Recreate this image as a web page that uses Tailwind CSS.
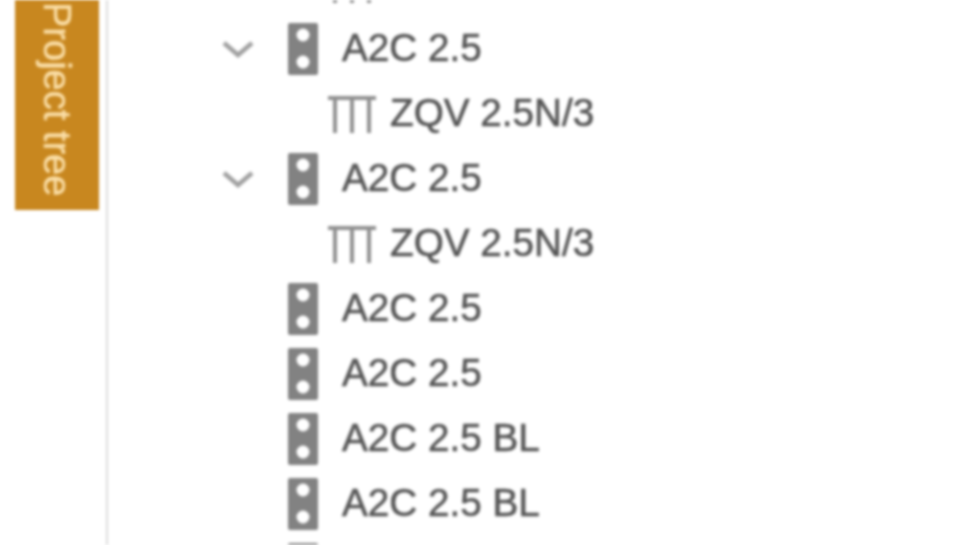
<!DOCTYPE html>
<html lang="en">
<head>
    <meta charset="UTF-8">
    <title>Project tree</title>
    <script src="https://cdn.jsdelivr.net/npm/@tailwindcss/browser@4"></script>
</head>
<body class="bg-white font-['Liberation_Sans',Arial,sans-serif]">
<div class="flex h-[545px] w-[970px] overflow-hidden bg-white blur-[1.4px]">
    <!-- side rail -->
    <div class="w-[108px] h-full shrink-0 border-r-2 border-[#dcdcdc] pl-[15px]">
        <div class="flex h-[210px] w-[84px] items-end justify-center overflow-hidden bg-[#c8871f] pb-[14px]">
            <span class="[writing-mode:vertical-rl] [-webkit-text-stroke:0.5px_#fbdfa8] whitespace-nowrap text-[38px] leading-none text-[#fbdfa8]">Project tree</span>
        </div>
    </div>

    <!-- tree -->
    <div class="-mt-[49px] flex-1 text-[38.7px] leading-none text-[#555] [-webkit-text-stroke:0.6px_#555]">
        <div class="flex h-[65px] items-center pl-[220px]">
            <svg class="w-[48px] h-[38px]" viewBox="0 0 48 38" fill="none" stroke="#8f8f8f" stroke-width="4"><path d="M0 3H48M7 3V38M24 3V38M41 3V38"/></svg>
        </div>

        <div class="flex h-[65px] items-center pl-[114px]">
            <svg class="w-[32px] h-[18px]" viewBox="0 0 32 18" fill="none" stroke="#a0a0a0" stroke-width="4.5"><path d="M2 3L16 15L30 3"/></svg>
            <svg class="ml-[34px] mr-[24px] w-[30px] h-[52px]" viewBox="0 0 30 52"><path fill="#828282" fill-rule="evenodd" d="M2 0H28A2 2 0 0 1 30 2V50A2 2 0 0 1 28 52H2A2 2 0 0 1 0 50V2A2 2 0 0 1 2 0ZM15 5.5A6.5 6.5 0 1 0 15 18.5A6.5 6.5 0 1 0 15 5.5ZM15 32.5A6.5 6.5 0 1 0 15 45.5A6.5 6.5 0 1 0 15 32.5Z"/></svg>
            <span>A2C 2.5</span>
        </div>
        <div class="flex h-[65px] items-center pl-[220px]">
            <svg class="mr-[14px] w-[48px] h-[38px]" viewBox="0 0 48 38" fill="none" stroke="#8f8f8f" stroke-width="4"><path d="M0 3H48M7 3V38M24 3V38M41 3V38"/></svg>
            <span>ZQV 2.5N/3</span>
        </div>

        <div class="flex h-[65px] items-center pl-[114px]">
            <svg class="w-[32px] h-[18px]" viewBox="0 0 32 18" fill="none" stroke="#a0a0a0" stroke-width="4.5"><path d="M2 3L16 15L30 3"/></svg>
            <svg class="ml-[34px] mr-[24px] w-[30px] h-[52px]" viewBox="0 0 30 52"><path fill="#828282" fill-rule="evenodd" d="M2 0H28A2 2 0 0 1 30 2V50A2 2 0 0 1 28 52H2A2 2 0 0 1 0 50V2A2 2 0 0 1 2 0ZM15 5.5A6.5 6.5 0 1 0 15 18.5A6.5 6.5 0 1 0 15 5.5ZM15 32.5A6.5 6.5 0 1 0 15 45.5A6.5 6.5 0 1 0 15 32.5Z"/></svg>
            <span>A2C 2.5</span>
        </div>
        <div class="flex h-[65px] items-center pl-[220px]">
            <svg class="mr-[14px] w-[48px] h-[38px]" viewBox="0 0 48 38" fill="none" stroke="#8f8f8f" stroke-width="4"><path d="M0 3H48M7 3V38M24 3V38M41 3V38"/></svg>
            <span>ZQV 2.5N/3</span>
        </div>

        <div class="flex h-[65px] items-center pl-[180px]">
            <svg class="mr-[24px] w-[30px] h-[52px]" viewBox="0 0 30 52"><path fill="#828282" fill-rule="evenodd" d="M2 0H28A2 2 0 0 1 30 2V50A2 2 0 0 1 28 52H2A2 2 0 0 1 0 50V2A2 2 0 0 1 2 0ZM15 5.5A6.5 6.5 0 1 0 15 18.5A6.5 6.5 0 1 0 15 5.5ZM15 32.5A6.5 6.5 0 1 0 15 45.5A6.5 6.5 0 1 0 15 32.5Z"/></svg>
            <span>A2C 2.5</span>
        </div>
        <div class="flex h-[65px] items-center pl-[180px]">
            <svg class="mr-[24px] w-[30px] h-[52px]" viewBox="0 0 30 52"><path fill="#828282" fill-rule="evenodd" d="M2 0H28A2 2 0 0 1 30 2V50A2 2 0 0 1 28 52H2A2 2 0 0 1 0 50V2A2 2 0 0 1 2 0ZM15 5.5A6.5 6.5 0 1 0 15 18.5A6.5 6.5 0 1 0 15 5.5ZM15 32.5A6.5 6.5 0 1 0 15 45.5A6.5 6.5 0 1 0 15 32.5Z"/></svg>
            <span>A2C 2.5</span>
        </div>
        <div class="flex h-[65px] items-center pl-[180px]">
            <svg class="mr-[24px] w-[30px] h-[52px]" viewBox="0 0 30 52"><path fill="#828282" fill-rule="evenodd" d="M2 0H28A2 2 0 0 1 30 2V50A2 2 0 0 1 28 52H2A2 2 0 0 1 0 50V2A2 2 0 0 1 2 0ZM15 5.5A6.5 6.5 0 1 0 15 18.5A6.5 6.5 0 1 0 15 5.5ZM15 32.5A6.5 6.5 0 1 0 15 45.5A6.5 6.5 0 1 0 15 32.5Z"/></svg>
            <span>A2C 2.5 BL</span>
        </div>
        <div class="flex h-[65px] items-center pl-[180px]">
            <svg class="mr-[24px] w-[30px] h-[52px]" viewBox="0 0 30 52"><path fill="#828282" fill-rule="evenodd" d="M2 0H28A2 2 0 0 1 30 2V50A2 2 0 0 1 28 52H2A2 2 0 0 1 0 50V2A2 2 0 0 1 2 0ZM15 5.5A6.5 6.5 0 1 0 15 18.5A6.5 6.5 0 1 0 15 5.5ZM15 32.5A6.5 6.5 0 1 0 15 45.5A6.5 6.5 0 1 0 15 32.5Z"/></svg>
            <span>A2C 2.5 BL</span>
        </div>
        <div class="flex h-[65px] items-center pl-[180px]">
            <svg class="mr-[24px] w-[30px] h-[52px]" viewBox="0 0 30 52"><path fill="#828282" fill-rule="evenodd" d="M2 0H28A2 2 0 0 1 30 2V50A2 2 0 0 1 28 52H2A2 2 0 0 1 0 50V2A2 2 0 0 1 2 0ZM15 5.5A6.5 6.5 0 1 0 15 18.5A6.5 6.5 0 1 0 15 5.5ZM15 32.5A6.5 6.5 0 1 0 15 45.5A6.5 6.5 0 1 0 15 32.5Z"/></svg>
        </div>
    </div>
</div>
</body>
</html>
